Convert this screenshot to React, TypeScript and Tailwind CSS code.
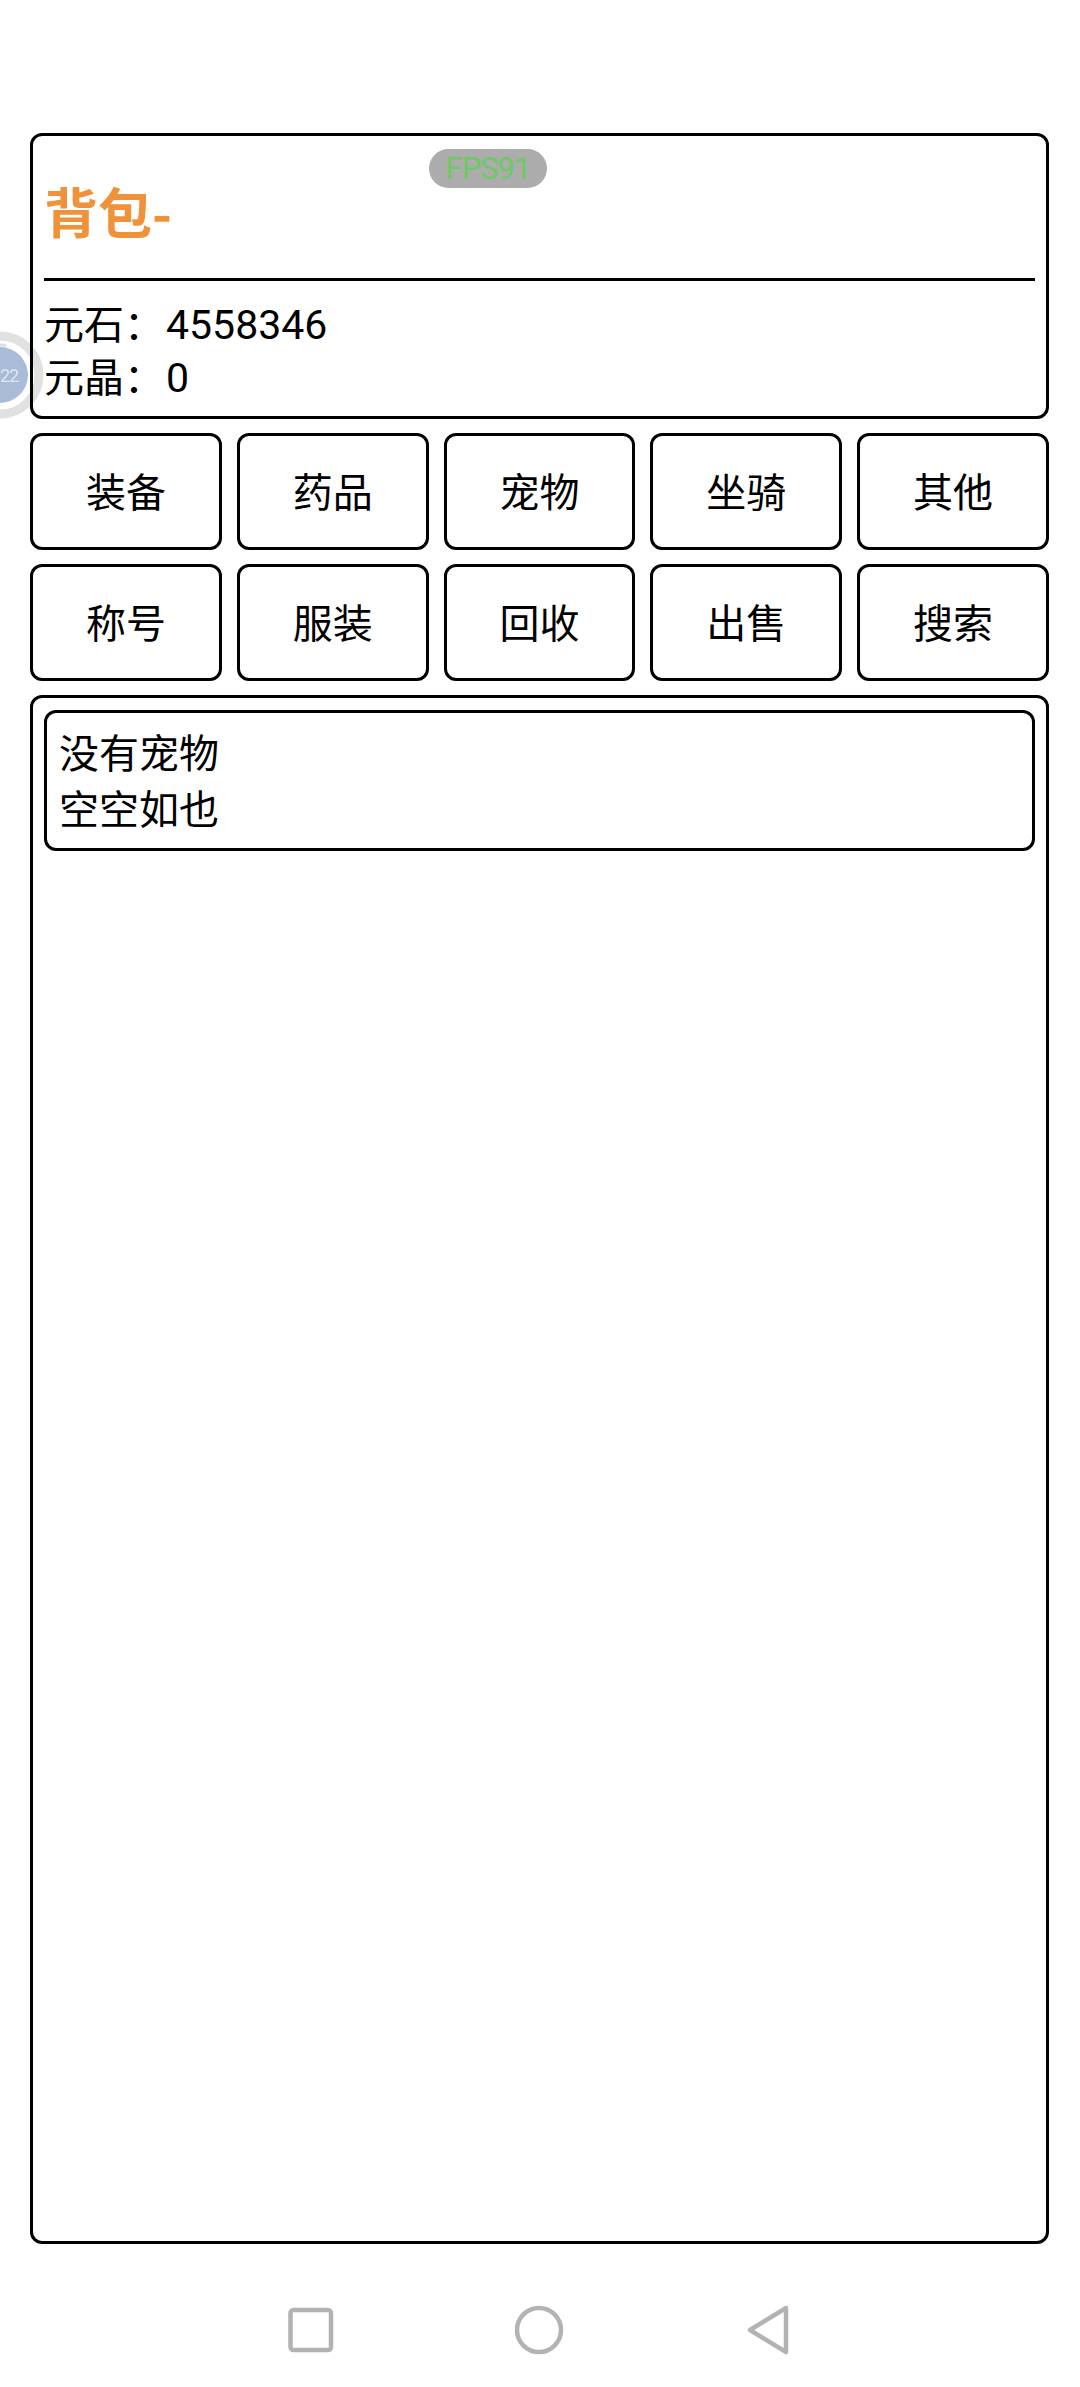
const tabs = [
  ["装备", "药品", "宠物", "坐骑", "其他"],
  ["称号", "服装", "回收", "出售", "搜索"],
]

function TabButton({ label }: { label: string }) {
  return (
    <button className="flex h-[117px] items-center justify-center rounded-[12px] border-[3px] border-black pb-[3px] text-[40px] text-black">
      {label}
    </button>
  )
}

function FloatingBall() {
  return (
    <svg className="absolute left-0 top-[331px]" width="44" height="88" viewBox="0 0 44 88">
      <circle cx="0" cy="44" r="39" fill="none" stroke="#e1e1e1" strokeWidth="9" />
      <circle cx="0" cy="44" r="28" fill="#a9bbd6" />
      <path d="M 0 14 A 30 30 0 0 1 6 14.6" fill="none" stroke="#d5deeb" strokeWidth="3" />
      <path d="M 20 22 A 30 30 0 0 1 0 74" fill="none" stroke="#ffffff" strokeWidth="3" />
      <text x="0" y="51" fontSize="18" letterSpacing="-1" fill="#dfe6f0" fontFamily="Roboto, sans-serif">22</text>
    </svg>
  )
}

export default function App() {
  return (
    <div className="relative h-[2387px] w-[1080px] overflow-hidden bg-white pl-[30px] pr-[31px] pt-[133px] font-['Noto_Sans_CJK_SC','Noto_Sans',sans-serif] text-black">
      <FloatingBall />

      {/* FPS badge */}
      <div className="absolute left-[429px] top-[149px] flex h-[39px] w-[118px] items-center justify-center rounded-full bg-[#acacac] font-['Roboto',sans-serif] text-[31px] leading-none tracking-[-1px] text-[#6cc964]">
        FPS91
      </div>

      {/* Header */}
      <div className="relative h-[286px] rounded-[12px] border-[3px] border-black px-[11px]">
        <div className="flex h-[142px] items-center pt-[8px] text-[54px] font-bold leading-none text-[#ef9239]">
          背包-
        </div>
        <div className="h-[3px] bg-black" />
        <div className="pt-[15px] text-[40px] leading-[53px]">
          <div>
            元石：<span className="ml-[2px] font-['Roboto',sans-serif] text-[41px] leading-none">4558346</span>
          </div>
          <div>
            元晶：<span className="ml-[2px] font-['Roboto',sans-serif] text-[41px] leading-none">0</span>
          </div>
        </div>
      </div>

      {/* Tabs */}
      <div className="mt-[14px] grid grid-cols-5 gap-x-[15px] gap-y-[14px]">
        {tabs.flat().map((label) => (
          <TabButton key={label} label={label} />
        ))}
      </div>

      {/* List */}
      <div className="mt-[14px] h-[1549px] rounded-[12px] border-[3px] border-black px-[11px] pt-[12px]">
        <div className="h-[141px] rounded-[12px] border-[3px] border-black px-[12px] pt-[10px] text-[40px] leading-[56px]">
          <div>没有宠物</div>
          <div>空空如也</div>
        </div>
      </div>

      {/* Nav bar */}
      <div className="absolute left-0 top-[2304px] h-[52px] w-full">
        <svg width="1080" height="52" viewBox="0 0 1080 52" fill="none" stroke="#b3b3b3" strokeWidth="4.5" strokeLinejoin="round">
          <rect x="290.5" y="6" width="40.5" height="40" rx="3" />
          <ellipse cx="539" cy="26" rx="22" ry="22" />
          <path d="M786 4 L750 26 L786 48 Z" />
        </svg>
      </div>
    </div>
  )
}
